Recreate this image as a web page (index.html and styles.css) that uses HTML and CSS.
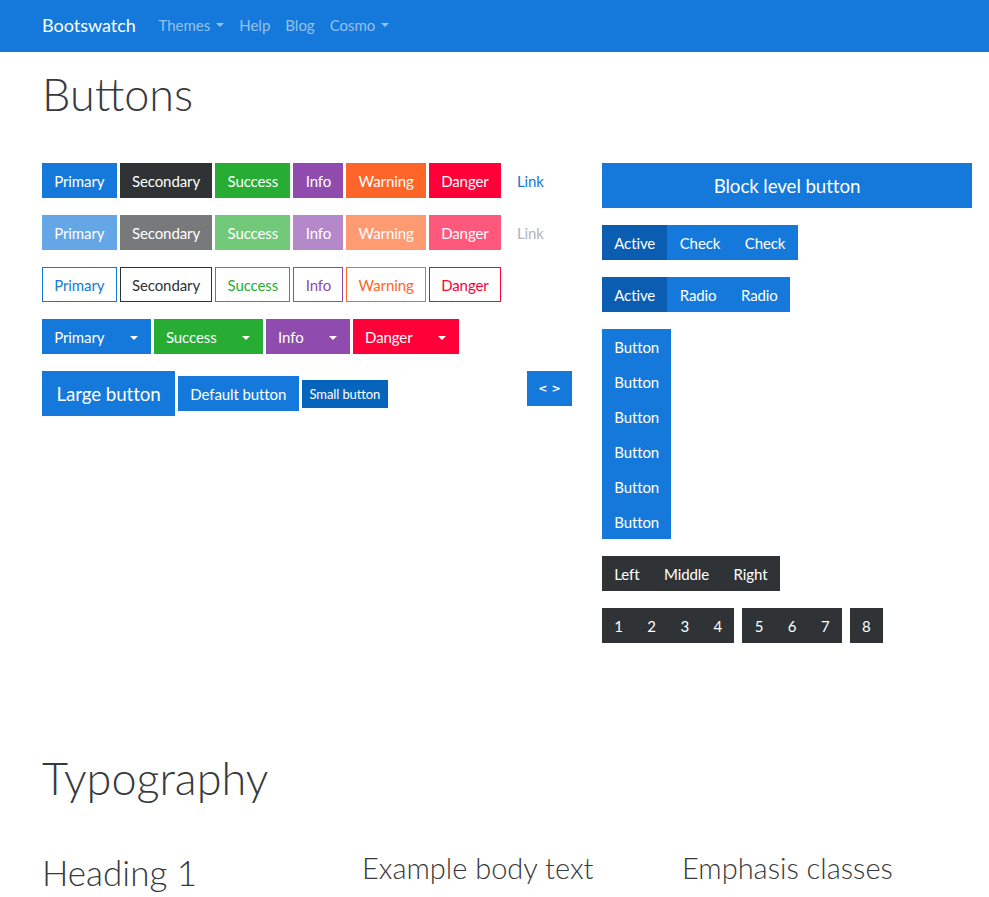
FILE: index.html
```html
<!DOCTYPE html>
<html lang="en">
<head>
<meta charset="utf-8">
<title>Bootswatch: Cosmo</title>
<link rel="stylesheet" href="styles.css">
</head>
<body>
<nav class="navbar">
  <div class="nav-inner">
    <a class="brand" href="#">Bootswatch</a>
    <ul class="nav-links">
      <li><a href="#" class="dropdown-toggle">Themes</a></li>
      <li><a href="#">Help</a></li>
      <li><a href="#">Blog</a></li>
      <li><a href="#" class="dropdown-toggle">Cosmo</a></li>
    </ul>
  </div>
</nav>

<main class="container">
  <section class="docs-section">
    <h1 class="page-title">Buttons</h1>
    <div class="buttons-grid">
      <div class="col-left">
        <div class="btn-row">
          <button class="btn btn-primary">Primary</button>
          <button class="btn btn-secondary">Secondary</button>
          <button class="btn btn-success">Success</button>
          <button class="btn btn-info">Info</button>
          <button class="btn btn-warning">Warning</button>
          <button class="btn btn-danger">Danger</button>
          <button class="btn btn-link">Link</button>
        </div>
        <div class="btn-row disabled">
          <button class="btn btn-primary">Primary</button>
          <button class="btn btn-secondary">Secondary</button>
          <button class="btn btn-success">Success</button>
          <button class="btn btn-info">Info</button>
          <button class="btn btn-warning">Warning</button>
          <button class="btn btn-danger">Danger</button>
          <button class="btn btn-link link-disabled">Link</button>
        </div>
        <div class="btn-row">
          <button class="btn btn-outline-primary">Primary</button>
          <button class="btn btn-outline-secondary">Secondary</button>
          <button class="btn btn-outline-success">Success</button>
          <button class="btn btn-outline-info">Info</button>
          <button class="btn btn-outline-warning">Warning</button>
          <button class="btn btn-outline-danger">Danger</button>
        </div>
        <div class="btn-row">
          <div class="btn-group"><button class="btn btn-primary">Primary</button><button class="btn btn-primary split"><span class="caret"></span></button></div>
          <div class="btn-group"><button class="btn btn-success">Success</button><button class="btn btn-success split"><span class="caret"></span></button></div>
          <div class="btn-group"><button class="btn btn-info">Info</button><button class="btn btn-info split"><span class="caret"></span></button></div>
          <div class="btn-group"><button class="btn btn-danger">Danger</button><button class="btn btn-danger split"><span class="caret"></span></button></div>
        </div>
        <div class="btn-row sizes">
          <button class="btn btn-primary btn-lg">Large button</button>
          <button class="btn btn-primary">Default button</button>
          <button class="btn btn-primary btn-sm btn-hover">Small button</button>
          <button class="source-button">&lt; &gt;</button>
        </div>
      </div>

      <div class="col-right">
        <button class="btn btn-primary btn-lg btn-block">Block level button</button>
        <div class="btn-group">
          <button class="btn btn-primary active">Active</button><button class="btn btn-primary">Check</button><button class="btn btn-primary">Check</button>
        </div>
        <div class="btn-group">
          <button class="btn btn-primary active">Active</button><button class="btn btn-primary">Radio</button><button class="btn btn-primary">Radio</button>
        </div>
        <div class="btn-group-vertical">
          <button class="btn btn-primary">Button</button>
          <button class="btn btn-primary">Button</button>
          <button class="btn btn-primary">Button</button>
          <button class="btn btn-primary">Button</button>
          <button class="btn btn-primary">Button</button>
          <button class="btn btn-primary">Button</button>
        </div>
        <div class="btn-group">
          <button class="btn btn-secondary">Left</button><button class="btn btn-secondary">Middle</button><button class="btn btn-secondary">Right</button>
        </div>
        <div class="btn-toolbar">
          <div class="btn-group">
            <button class="btn btn-secondary">1</button><button class="btn btn-secondary">2</button><button class="btn btn-secondary">3</button><button class="btn btn-secondary">4</button>
          </div>
          <div class="btn-group">
            <button class="btn btn-secondary">5</button><button class="btn btn-secondary">6</button><button class="btn btn-secondary">7</button>
          </div>
          <div class="btn-group">
            <button class="btn btn-secondary">8</button>
          </div>
        </div>
      </div>
    </div>
  </section>

  <section class="docs-section typography">
    <h1 class="page-title">Typography</h1>
    <div class="typo-grid">
      <div><h1 class="h1">Heading 1</h1></div>
      <div><h2 class="h2">Example body text</h2></div>
      <div><h2 class="h2">Emphasis classes</h2></div>
    </div>
  </section>
</main>
</body>
</html>
```

FILE: styles.css
```css
* { box-sizing: border-box; }

html, body { margin: 0; padding: 0; }

body {
  font-family: "Lato", "Liberation Sans", sans-serif;
  font-size: 15px;
  line-height: 1.5;
  color: #373a3c;
  background: #fff;
  overflow: hidden;
}

a { text-decoration: none; }

/* Navbar */
.navbar {
  background: #1479da;
  height: 52px;
}
.nav-inner {
  display: flex;
  align-items: center;
  height: 100%;
  padding-left: 42px;
  padding-bottom: 2px;
}
.brand {
  color: #fff;
  font-size: 18px;
  margin-right: 15px;
}
.nav-links {
  list-style: none;
  display: flex;
  margin: 0;
  padding: 0;
}
.nav-links a {
  display: block;
  padding: 0 7.5px;
  color: rgba(255, 255, 255, 0.55);
  font-size: 15px;
}
.dropdown-toggle::after,
.caret {
  content: "";
  display: inline-block;
  vertical-align: 0.255em;
  border-top: 0.3em solid;
  border-left: 0.3em solid transparent;
  border-right: 0.3em solid transparent;
  border-bottom: 0;
}
.dropdown-toggle::after { margin-left: 0.4em; }

/* Layout */
.container {
  padding-left: 42px;
  width: 972px;
}
.page-title {
  font-size: 45px;
  font-weight: 300;
  line-height: 1.2;
  margin: 0;
  padding: 15px 0 0;
  height: 111px;
}
.buttons-grid {
  display: grid;
  grid-template-columns: 530px 370px;
  column-gap: 30px;
}
.col-left, .col-right {
  display: flex;
  flex-direction: column;
  align-items: flex-start;
  gap: 17px;
}
.btn-row {
  display: flex;
  gap: 3px;
  align-items: flex-start;
  width: 100%;
}
.btn-row.sizes {
  align-items: center;
  position: relative;
}

/* Buttons */
.btn {
  font-family: inherit;
  font-size: 15px;
  line-height: 22px;
  letter-spacing: -0.1px;
  padding: 5.5px 11.25px;
  border: 1px solid transparent;
  border-radius: 0;
  color: #fff;
  background: transparent;
  cursor: pointer;
  white-space: nowrap;
  margin: 0;
}
.btn-primary { background: #1479da; border-color: #1479da; }
.btn-secondary { background: #2f3335; border-color: #2f3335; }
.btn-success { background: #27ad33; border-color: #27ad33; }
.btn-info { background: #8f4bad; border-color: #8f4bad; }
.btn-warning { background: #fe6629; border-color: #fe6629; }
.btn-danger { background: #ff0039; border-color: #ff0039; }
.btn-link { color: #1479da; padding-left: 12px; }
.btn-link.link-disabled { color: #868e96; }

.disabled .btn { opacity: 0.65; }

.btn-outline-primary { color: #1479da; border-color: #1479da; }
.btn-outline-secondary { color: #2f3335; border-color: #2f3335; }
.btn-outline-success { color: #27ad33; border-color: #27ad33; }
.btn-outline-info { color: #8f4bad; border-color: #8f4bad; }
.btn-outline-warning { color: #fe6629; border-color: #fe6629; }
.btn-outline-danger { color: #ff0039; border-color: #ff0039; }

.btn-group { display: inline-flex; }
.btn.split { padding-left: 12px; padding-right: 12px; }
.btn .caret { vertical-align: 0.2em; }

.btn-lg {
  font-size: 18.75px;
  line-height: 28px;
  padding: 7.5px 13.5px;
}
.btn-sm {
  font-size: 13px;
  line-height: 18px;
  padding: 4px 7px;
}
.btn-hover { background: #0764bd; border-color: #0764bd; }
.btn.active { background: #0a5db0; border-color: #0a5db0; }

.btn-block {
  width: 100%;
  text-align: center;
}

.btn-group-vertical {
  display: inline-flex;
  flex-direction: column;
}
.btn-group-vertical .btn { text-align: left; }

.btn-toolbar {
  display: flex;
  gap: 8px;
}

.source-button {
  position: absolute;
  right: 0;
  top: 0;
  width: 45px;
  height: 35px;
  border: 0;
  background: #1479da;
  color: #fff;
  font-family: "DejaVu Sans", sans-serif;
  font-weight: bold;
  font-size: 11px;
  padding: 0;
  cursor: pointer;
}

/* Typography */
.typography { margin-top: 93px; }
.typography .page-title { height: 115px; }
.typo-grid {
  display: grid;
  grid-template-columns: repeat(3, 290px);
  column-gap: 30px;
}
.h1, .h2 {
  margin: 0;
  font-weight: 300;
  line-height: 1.2;
}
.h1 { font-size: 35px; }
.h2 { font-size: 29px; }
```
